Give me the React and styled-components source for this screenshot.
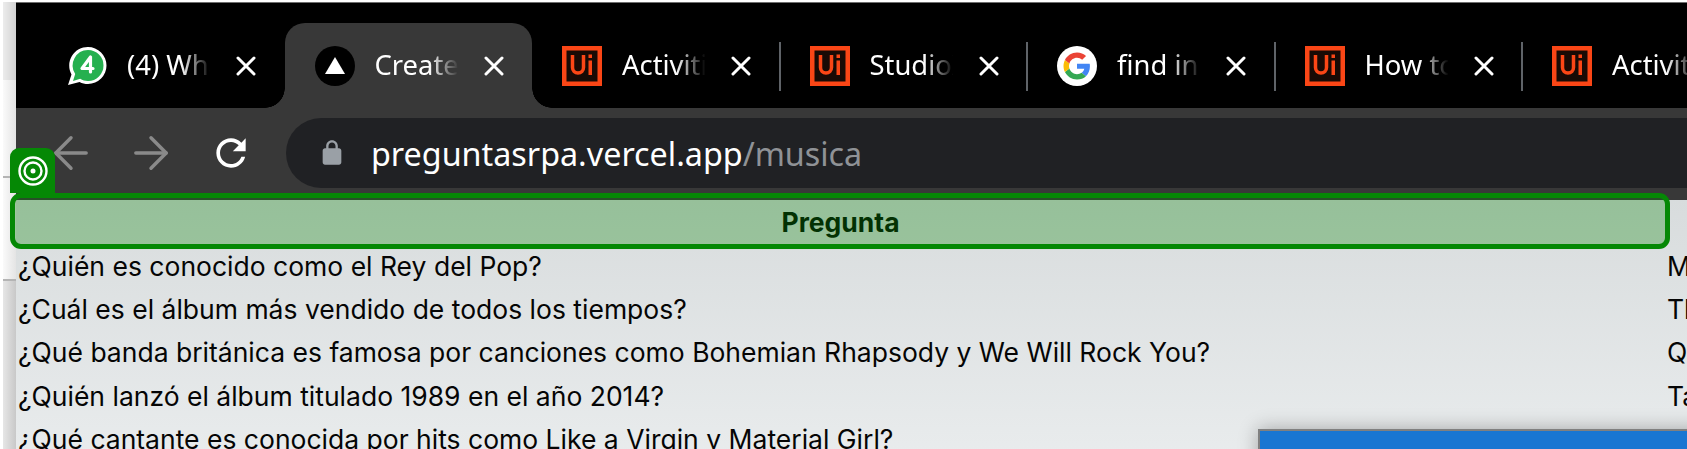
import styled, { createGlobalStyle } from "styled-components";
import { ArrowLeft, ArrowRight } from "lucide-react";

const GlobalStyle = createGlobalStyle`
  html, body {
    margin: 0;
    padding: 0;
    background: #fff;
  }
  body {
    width: 1687px;
    height: 449px;
    overflow: hidden;
  }
`;

// left edge + browser window
const Page = styled.div`
  display: flex;
  width: 1687px;
  height: 449px;
  overflow: hidden;
  padding-top: 2px;
  box-sizing: border-box;
`;

const LeftEdge = styled.div`
  flex: 0 0 16px;
  display: flex;
  flex-direction: column;
  padding-left: 3px;
  box-sizing: border-box;
`;

const EdgePart = styled.div`
  flex: ${(p) => p.$grow ? "1" : `0 0 ${p.$h}px`};
  background: linear-gradient(90deg, ${(p) => p.$from}, ${(p) => p.$to});
  border-bottom: ${(p) => (p.$line ? "2px solid #b4b4b4" : "none")};
  box-sizing: border-box;
`;

const Browser = styled.div`
  flex: 1;
  min-width: 0;
  display: flex;
  flex-direction: column;
  border-top: 1px solid #6e6e6e;
`;

const TabStrip = styled.div`
  flex: 0 0 105px;
  box-sizing: border-box;
  display: flex;
  align-items: flex-end;
  background: #000;
  padding-left: 21px;
  overflow: hidden;
`;

const Tab = styled.div`
  position: relative;
  flex: 0 0 247.5px;
  height: 85px;
  box-sizing: border-box;
  display: flex;
  align-items: center;
  padding-left: 30px;
  font-family: "Noto Sans", sans-serif;
  font-size: 27.4px;
  color: #fff;
  background: ${(p) => (p.$active ? "#383838" : "transparent")};
  border-radius: 20px 20px 0 0;

  /* separator at the end of inactive tabs */
  &::after {
    content: "";
    display: ${(p) => (p.$sep ? "block" : "none")};
    position: absolute;
    right: -1px;
    top: 19px;
    width: 2px;
    height: 49px;
    background: #5f6368;
  }
`;

// concave corner next to the active tab
const TabFlare = styled.span`
  position: absolute;
  bottom: 0;
  ${(p) => (p.$side === "left" ? "left: -20px;" : "right: -20px;")}
  width: 20px;
  height: 20px;
  background: radial-gradient(
    circle at ${(p) => (p.$side === "left" ? "0 0" : "100% 0")},
    #000 19.5px,
    #383838 20px
  );
`;

const Favicon = styled.span`
  flex: 0 0 40px;
  width: 40px;
  height: 40px;
  display: block;

  svg {
    display: block;
  }
`;

const TabTitle = styled.span`
  flex: 0 0 87px;
  height: 40px;
  line-height: 37px;
  margin-left: 20px;
  white-space: nowrap;
  overflow: hidden;
  -webkit-mask-image: linear-gradient(90deg, #000 62%, transparent 96%);
  mask-image: linear-gradient(90deg, #000 62%, transparent 96%);
`;

const TabClose = styled.span`
  margin-left: 22px;
  width: 20px;
  height: 20px;
  display: block;

  svg {
    display: block;
  }
`;

const Toolbar = styled.div`
  flex: 0 0 92px;
  box-sizing: border-box;
  display: flex;
  align-items: flex-start;
  background: #383838;
  padding: 10px 0 0 15px;
`;

const NavButton = styled.span`
  flex: 0 0 80px;
  height: 70px;
  display: flex;
  align-items: center;
  justify-content: center;
  color: ${(p) => p.$color};
`;

const Omnibox = styled.div`
  flex: 1;
  height: 70px;
  margin-left: 15px;
  box-sizing: border-box;
  display: flex;
  align-items: center;
  padding-left: 32px;
  background: #202124;
  border-radius: 35px 0 0 35px;
  font-family: "Noto Sans", sans-serif;
  font-size: 32.3px;
  color: #fff;
  white-space: nowrap;
`;

const LockIcon = styled.svg`
  width: 28px;
  height: 28px;
  margin-right: 25px;
  flex: none;
`;

const UrlPath = styled.span`
  color: #8f9296;
`;

const Content = styled.div`
  position: relative;
  flex: 1;
  background: linear-gradient(180deg, #d8dcdd 0%, #e9eced 100%);
  font-family: Inter, "Liberation Sans", sans-serif;
  font-size: 26.5px;
  color: #050505;
`;

const Row = styled.div`
  display: grid;
  grid-template-columns: 1649px 300px;
  height: ${(p) => (p.$head ? "44px" : "43.4px")};
  align-items: center;
  white-space: nowrap;
`;

const HeadCell = styled.div`
  position: relative;
  width: 1649px;
  height: 44px;
  line-height: 44px;
  text-align: center;
  font-weight: 700;
  color: #050f05;
`;

const Cell = styled.div`
  padding-left: 2px;
`;

// element picker highlight over the header cell
const Highlight = styled.div`
  position: absolute;
  top: -7px;
  right: -5px;
  bottom: -5px;
  left: -6px;
  border: 5px solid #058805;
  border-radius: 11px;
  background: rgba(0, 128, 0, 0.3);
`;

const HighlightTag = styled.div`
  position: absolute;
  left: -5px;
  bottom: calc(100% + 5px);
  width: 45px;
  height: 45px;
  display: flex;
  align-items: center;
  justify-content: center;
  background: #058805;
  border-radius: 9px 9px 0 0;
`;

const Popup = styled.div`
  position: absolute;
  left: 1242px;
  top: 229px;
  width: 600px;
  height: 200px;
  box-sizing: border-box;
  background: #1976d2;
  border: 2px solid #808080;
  box-shadow: 0 0 18px rgba(0, 0, 0, 0.3);
`;

const UiLogo = () => (
  <svg viewBox="0 0 40 40" width="40" height="40">
    <rect width="40" height="40" fill="#fa4616" />
    <rect x="4.5" y="4.5" width="31" height="31" fill="#180a05" />
    <path
      d="M10.5 9v12.5a5.5 5.5 0 0 0 11 0V9"
      fill="none"
      stroke="#fa4616"
      strokeWidth="3.5"
    />
    <rect x="26.5" y="14.5" width="3.5" height="14.5" fill="#fa4616" />
    <rect x="26.5" y="8.5" width="3.5" height="3.5" fill="#fa4616" />
  </svg>
);

const WhatsappLogo = () => (
  <svg viewBox="0 0 40 40" width="40" height="40">
    <path
      d="M21 1a18.5 18.5 0 0 1 0 37c-3 0-6-.8-8.4-2.1L1 39l3.5-10.6A18.5 18.5 0 0 1 21 1z"
      fill="#fff"
    />
    <path
      d="M21 4a15.5 15.5 0 0 1 0 31c-2.9 0-5.5-.8-7.8-2.2L6 35l2.2-7A15.5 15.5 0 0 1 21 4z"
      fill="#25b04f"
    />
    <path
      d="M23.5 11 15 22.5h11M23.5 11v15"
      fill="none"
      stroke="#fff"
      strokeWidth="3.2"
      strokeLinejoin="round"
      strokeLinecap="round"
    />
  </svg>
);

const VercelLogo = () => (
  <svg viewBox="0 0 40 40" width="40" height="40">
    <circle cx="20" cy="20" r="20" fill="#000" />
    <path d="M20 11 30 28H10z" fill="#fff" />
  </svg>
);

const GoogleLogo = () => (
  <svg viewBox="0 0 40 40" width="40" height="40">
    <circle cx="20" cy="20" r="20" fill="#fff" />
    <g transform="translate(6.5 6.5) scale(0.5625)">
      <path fill="#4285F4" d="M46.98 24.55c0-1.57-.15-3.09-.38-4.55H24v9.02h12.94c-.58 2.96-2.26 5.48-4.78 7.18l7.73 6c4.51-4.18 7.09-10.36 7.09-17.65z" />
      <path fill="#34A853" d="M24 48c6.48 0 11.93-2.13 15.89-5.81l-7.73-6c-2.15 1.45-4.92 2.3-8.16 2.3-6.26 0-11.57-4.22-13.47-9.91l-7.98 6.19C6.51 42.62 14.62 48 24 48z" />
      <path fill="#FBBC05" d="M10.53 28.59c-.48-1.45-.76-2.99-.76-4.59s.27-3.14.76-4.59l-7.98-6.19C.92 16.46 0 20.12 0 24c0 3.88.92 7.54 2.56 10.78l7.97-6.19z" />
      <path fill="#EA4335" d="M24 9.5c3.54 0 6.71 1.22 9.21 3.6l6.85-6.85C35.9 2.38 30.47 0 24 0 14.62 0 6.51 5.38 2.56 13.22l7.98 6.19C12.43 13.72 17.74 9.5 24 9.5z" />
    </g>
  </svg>
);

const CloseIcon = () => (
  <svg viewBox="0 0 20 20" width="20" height="20">
    <path d="M2 2 18 18M18 2 2 18" stroke="#fff" strokeWidth="3" strokeLinecap="round" />
  </svg>
);

const tabs = [
  { title: "(4) WhatsApp", logo: <WhatsappLogo /> },
  { title: "Create Next App", logo: <VercelLogo />, active: true },
  { title: "Activities", logo: <UiLogo />, sep: true },
  { title: "StudioX", logo: <UiLogo />, sep: true },
  { title: "find in page", logo: <GoogleLogo />, sep: true },
  { title: "How to use", logo: <UiLogo />, sep: true },
  { title: "Activities", logo: <UiLogo /> },
];

const rows = [
  ["¿Quién es conocido como el Rey del Pop?", "Michael Jackson"],
  ["¿Cuál es el álbum más vendido de todos los tiempos?", "Thriller"],
  ["¿Qué banda británica es famosa por canciones como Bohemian Rhapsody y We Will Rock You?", "Queen"],
  ["¿Quién lanzó el álbum titulado 1989 en el año 2014?", "Taylor Swift"],
  ["¿Qué cantante es conocida por hits como Like a Virgin y Material Girl?", "Madonna"],
];

const App = () => {
  return (
    <>
      <GlobalStyle />
      <Page>
        <LeftEdge>
          <EdgePart $h={78} $from="#ececec" $to="#d2d2d2" />
          <EdgePart $h={98} $from="#fafafa" $to="#e4e4e4" $line />
          <EdgePart $h={103} $from="#fafafa" $to="#e4e4e4" $line />
          <EdgePart $grow $from="#e6e6e6" $to="#c8c8c8" />
        </LeftEdge>
        <Browser>
          <TabStrip>
            {tabs.map((tab, i) => (
              <Tab key={i} $active={tab.active} $sep={tab.sep}>
                {tab.active && <TabFlare $side="left" />}
                {tab.active && <TabFlare $side="right" />}
                <Favicon>{tab.logo}</Favicon>
                <TabTitle>{tab.title}</TabTitle>
                <TabClose>
                  <CloseIcon />
                </TabClose>
              </Tab>
            ))}
          </TabStrip>
          <Toolbar>
            <NavButton $color="#8a8a8a">
              <ArrowLeft size={52} strokeWidth={1.6} />
            </NavButton>
            <NavButton $color="#8a8a8a">
              <ArrowRight size={52} strokeWidth={1.6} />
            </NavButton>
            <NavButton $color="#fff">
              <svg viewBox="0 0 24 24" width="44" height="44" fill="currentColor">
                <path d="M17.65 6.35C16.2 4.9 14.21 4 12 4c-4.42 0-7.99 3.58-7.99 8s3.57 8 7.99 8c3.73 0 6.84-2.55 7.73-6h-2.08c-.82 2.33-3.04 4-5.65 4-3.31 0-6-2.69-6-6s2.69-6 6-6c1.66 0 3.14.69 4.22 1.78L13 11h7V4l-2.35 2.35z" />
              </svg>
            </NavButton>
            <Omnibox>
              <LockIcon viewBox="0 0 24 24" fill="#9aa0a6">
                <path d="M18 8h-1V6c0-2.76-2.24-5-5-5S7 3.24 7 6v2H6c-1.1 0-2 .9-2 2v10c0 1.1.9 2 2 2h12c1.1 0 2-.9 2-2V10c0-1.1-.9-2-2-2zM9 8V6c0-1.66 1.34-3 3-3s3 1.34 3 3v2H9z" />
              </LockIcon>
              preguntasrpa.vercel.app<UrlPath>/musica</UrlPath>
            </Omnibox>
          </Toolbar>
          <Content>
            <Row $head>
              <HeadCell>
                Pregunta
                <Highlight>
                  <HighlightTag>
                    <svg viewBox="0 0 30 30" width="30" height="30" fill="none" stroke="#fff" strokeWidth="2.4">
                      <circle cx="15" cy="15" r="13.5" />
                      <circle cx="15" cy="15" r="8.5" />
                      <circle cx="15" cy="15" r="2.5" fill="#fff" stroke="none" />
                    </svg>
                  </HighlightTag>
                </Highlight>
              </HeadCell>
            </Row>
            {rows.map(([question, answer]) => (
              <Row key={question}>
                <Cell>{question}</Cell>
                <Cell>{answer}</Cell>
              </Row>
            ))}
            <Popup />
          </Content>
        </Browser>
      </Page>
    </>
  );
};

export default App;
